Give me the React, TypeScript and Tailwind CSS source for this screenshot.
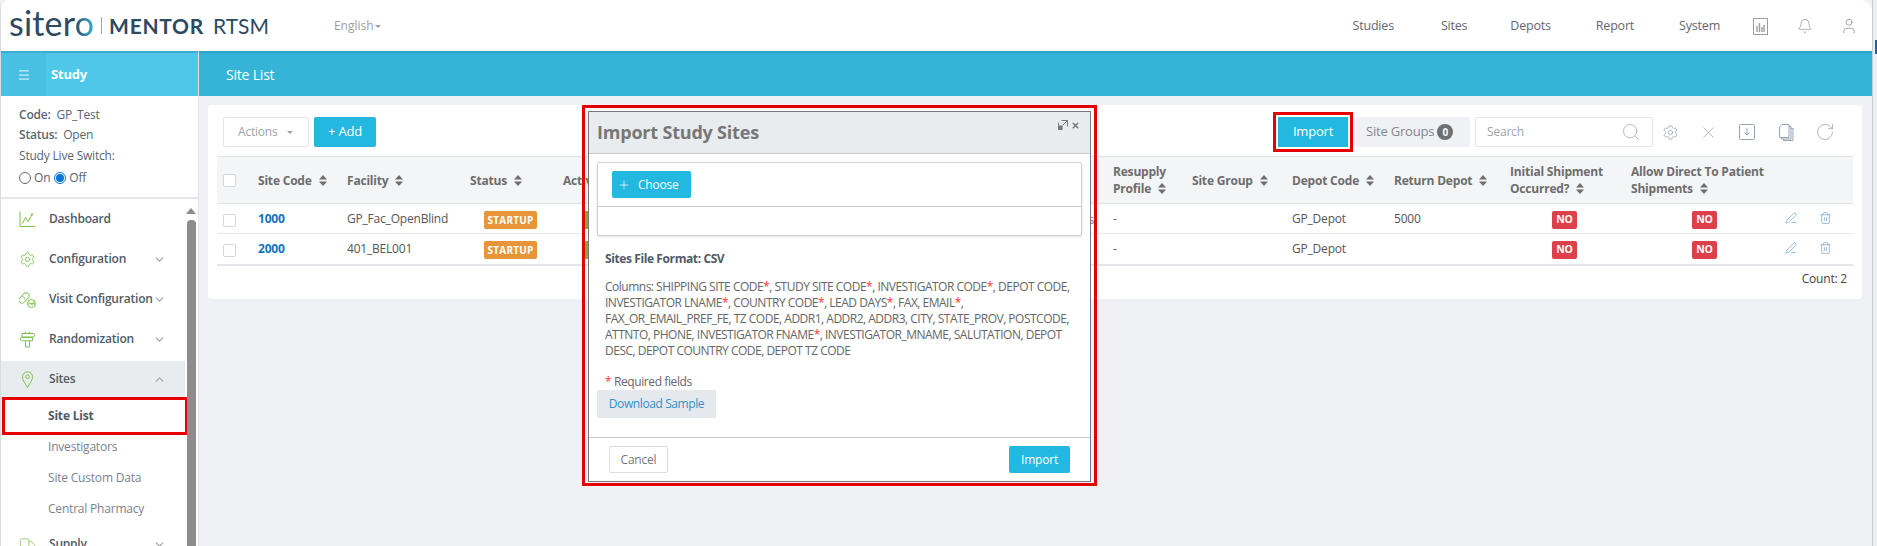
import { Bell, ChevronDown, ChevronUp, PenLine, Plus, RotateCw, Search, Settings, Trash2, Truck, User, X, Menu } from 'lucide-react';

const FONT = "font-['Open_Sans',sans-serif]";

function SortIcon() {
  return (
    <svg className="inline-block ml-[7px] w-[8px] h-[11px] align-[-1px]" viewBox="0 0 8 11" fill="#6f6f6f">
      <path d="M4 0L8 4.5H0z" />
      <path d="M4 11L0 6.5H8z" />
    </svg>
  );
}

function Box({ className = '' }: { className?: string }) {
  return <span className={`block w-[13px] h-[13px] border border-[#d3d6da] rounded-[2px] bg-white ${className}`} />;
}

function DashIcon() {
  return (
    <svg className="w-[17px] h-[17px]" viewBox="0 0 17 17" fill="none" stroke="#7dc14b" strokeWidth="1">
      <path d="M1 0.5V15.5H16.5" />
      <path d="M3.5 12.5L6.5 6.5L9 10.5L13 3.5" />
      <circle cx="13" cy="3.5" r="0.8" />
    </svg>
  );
}

function PillIcon() {
  return (
    <svg className="w-[17px] h-[17px]" viewBox="0 0 17 17" fill="none" stroke="#7dc14b" strokeWidth="1">
      <rect x="-1" y="4" width="12" height="6" rx="3" transform="rotate(-45 5 7)" />
      <path d="M3.5 5L7 8.5" />
      <circle cx="12.5" cy="12.5" r="4" />
      <path d="M9 12.8H16M11 11.5L13 13.5L15 10.5" />
    </svg>
  );
}

function SignIcon() {
  return (
    <svg className="w-[17px] h-[17px]" viewBox="0 0 17 17" fill="none" stroke="#7dc14b" strokeWidth="1">
      <path d="M3 2.5H14.5L16 4.2L14.5 6H3z" />
      <path d="M2.5 6.5H13.5V9.8H2.5L1 8.1z" />
      <path d="M6.5 1V2.5M10.5 1V2.5M6.5 10V16H10.5V10" />
    </svg>
  );
}

function PinIcon() {
  return (
    <svg className="w-[17px] h-[17px]" viewBox="0 0 17 17" fill="none" stroke="#7dc14b" strokeWidth="1">
      <path d="M8.5 16.5C6 12 3.5 9.5 3.5 5.8A5 5 0 0 1 13.5 5.8C13.5 9.5 11 12 8.5 16.5z" />
      <circle cx="8.5" cy="5.8" r="1.8" />
    </svg>
  );
}

function SideItem({ icon, label, chevron, active }: { icon: React.ReactNode; label: string; chevron?: 'up' | 'down'; active?: boolean }) {
  return (
    <div className={`flex items-center pl-[18px] pr-[19px] ${active ? 'h-[36px] mt-[2px] bg-[#e9ecef]' : 'h-[40px]'}`}>
      <span className="w-[30px] shrink-0 flex">{icon}</span>
      <span className="flex-1 whitespace-nowrap text-[12px] font-semibold text-[#4f5b66]">{label}</span>
      {chevron === 'up' && <ChevronUp className="w-[13px] h-[13px] shrink-0 text-[#a3a8ad]" strokeWidth={2.5} />}
      {chevron === 'down' && <ChevronDown className="w-[13px] h-[13px] shrink-0 text-[#a3a8ad]" strokeWidth={2.5} />}
    </div>
  );
}

const rows = [
  { code: '1000', facility: 'GP_Fac_OpenBlind', depot: 'GP_Depot', ret: '5000', hidden: 's' },
  { code: '2000', facility: '401_BEL001', depot: 'GP_Depot', ret: '', hidden: '' },
];

export default function App() {
  return (
    <div className={`${FONT} w-[1877px] h-[546px] overflow-hidden relative bg-[#eff1f5] flex tracking-[-0.2px]`}>
      <div className="w-[1872px] h-full flex flex-col border-l border-[#dcdcdc] overflow-hidden rounded-tl-[8px]">
        {/* Top nav */}
        <header className="h-[51px] shrink-0 bg-white flex items-center pl-[8px] text-[#5e6872] rounded-tr-[12px]">
          <div className="flex items-center text-[#2f4a5f]">
            <span className="font-['Lato',sans-serif] text-[34px] leading-none tracking-[0.2px] -mt-[5px]">
              siter
              <span className="bg-gradient-to-r from-[#2f4a5f] to-[#2fb4d8] bg-clip-text text-transparent">o</span>
            </span>
            <span className="w-px h-[17px] bg-[#9aa5ad] ml-[7px] mr-[7px]" />
            <span className="font-['Lato',sans-serif] text-[21px] font-bold tracking-[0.7px]">MENTOR</span>
            <span className="font-['Lato',sans-serif] text-[21px] ml-[9px] tracking-[0px]">RTSM</span>
          </div>
          <div className="ml-[65px] flex items-center text-[12px] tracking-normal text-[#9a9fa4]">
            English
            <span className="ml-[1px] mt-[1px] border-x-[3px] border-x-transparent border-t-[3px] border-t-[#9a9fa4]" />
          </div>
          <nav className="ml-auto mt-[1px] flex items-center text-[12.5px]">
            <span>Studies</span>
            <span className="ml-[47px]">Sites</span>
            <span className="ml-[43px]">Depots</span>
            <span className="ml-[45px]">Report</span>
            <span className="ml-[45px]">System</span>
            <svg className="ml-[33px] w-[15px] h-[17px]" viewBox="0 0 15 17" fill="none" stroke="#9a9fa4">
              <rect x="0.5" y="0.5" width="14" height="16" />
              <path d="M4 14V8M6.5 14V5M9 14V9M11 14V7" strokeWidth="1.4" />
            </svg>
            <Bell className="ml-[29px] w-[16px] h-[20px] text-[#8f9499]" strokeWidth={1.1} />
            <User className="ml-[27px] mr-[14px] w-[18px] h-[20px] text-[#8f9499]" strokeWidth={1.1} />
          </nav>
        </header>

        <div className="flex flex-1 min-h-0">
          {/* Sidebar */}
          <aside className="w-[198px] shrink-0 bg-white border-r border-[#e3e5e8] flex flex-col">
            <div className="h-[45px] shrink-0 bg-[#4fc7e9] border-t-2 border-[#3faecb] flex items-center text-white">
              <div className="w-[45px] h-full bg-[#48c0e3] flex items-center justify-center pl-[1px]">
                <Menu className="w-[14px] h-[14px]" strokeWidth={1.5} />
              </div>
              <span className="ml-[5px] text-[13px] font-bold">Study</span>
            </div>
            <div className="h-[103px] shrink-0 border-b-2 border-[#e4e6e9] pl-[18px] pt-[9px] text-[12px] text-[#5b6570] leading-[20px]">
              <p><b className="font-semibold">Code:</b>&nbsp; GP_Test</p>
              <p><b className="font-semibold">Status:</b>&nbsp; Open</p>
              <p className="mt-[1px]">Study Live Switch:</p>
              <div className="flex items-center mt-[2px]">
                <span className="w-[12px] h-[12px] rounded-full border border-[#666] bg-white" />
                <span className="ml-[3px]">On</span>
                <span className="ml-[4px] w-[12px] h-[12px] rounded-full border border-[#0b75d5] flex items-center justify-center">
                  <span className="w-[8px] h-[8px] rounded-full bg-[#0b75d5]" />
                </span>
                <span className="ml-[3px]">Off</span>
              </div>
            </div>
            <div className="flex flex-1 min-h-0 overflow-hidden">
              <div className="w-[184px] shrink-0">
                <SideItem icon={<DashIcon />} label="Dashboard" />
                <SideItem icon={<Settings className="w-[17px] h-[17px] text-[#7dc14b]" strokeWidth={1.2} />} label="Configuration" chevron="down" />
                <SideItem icon={<PillIcon />} label="Visit Configuration" chevron="down" />
                <SideItem icon={<SignIcon />} label="Randomization" chevron="down" />
                <SideItem icon={<PinIcon />} label="Sites" chevron="up" active />
                <div className="h-[38px] ml-[1px] border-[3px] border-[#e60000] flex items-center pl-[43px] text-[12px] font-bold text-[#4f5b66] w-[186px]">Site List</div>
                <div className="h-[31px] -mt-[4px] flex items-center pl-[47px] text-[12px] text-[#7a838c]">Investigators</div>
                <div className="h-[31px] flex items-center pl-[47px] text-[12px] text-[#7a838c]">Site Custom Data</div>
                <div className="h-[31px] flex items-center pl-[47px] text-[12px] text-[#7a838c]">Central Pharmacy</div>
                <SideItem icon={<Truck className="w-[17px] h-[17px] text-[#7dc14b]" strokeWidth={1} />} label="Supply" chevron="down" />
              </div>
              <div className="w-[12px] flex flex-col items-center pt-[9px]">
                <span className="border-x-[5px] border-x-transparent border-b-[6px] border-b-[#8c8c8c]" />
                <span className="w-[9px] flex-1 mt-[6px] bg-[#8c8c8c] rounded-t-[4px]" />
              </div>
            </div>
          </aside>

          {/* Main */}
          <main className="flex-1 min-w-0 flex flex-col">
            <div className="h-[45px] shrink-0 bg-[#36b4d7] border-t-2 border-[#2fa3c3] flex items-center pl-[27px] text-[14px] text-white">
              Site List
            </div>
            <div className="pl-[9px] pt-[9px] pr-[10px]">
              <div className="w-[1654px] h-[194px] bg-white rounded-[4px] pt-[12px] px-[9px]">
                {/* Toolbar */}
                <div className="h-[30px] flex items-center relative">
                  <div className="w-[86px] h-[30px] ml-[6px] border border-[#e4e6e9] rounded-[2px] flex items-center pl-[14px] text-[12px] text-[#9fa4a9]">
                    Actions
                    <span className="ml-[9px] border-x-[3px] border-x-transparent border-t-[3px] border-t-[#9fa4a9]" />
                  </div>
                  <button className="ml-[5px] w-[62px] h-[30px] bg-[#22b8e0] rounded-[2px] text-white text-[13px]">+ Add</button>
                  <div className="ml-auto flex items-center">
                    <div className="border-[3px] border-[#e60000] p-[2px] -my-[5px]">
                      <button className="block w-[70px] h-[30px] bg-[#22b8e0] text-white text-[13px]">Import</button>
                    </div>
                    <div className="w-[117px] h-[30px] bg-[#eff1f5] rounded-r-[2px] flex items-center pl-[13px] text-[13px] text-[#7f878f]">
                      Site Groups
                      <span className="ml-[3px] w-[16px] h-[16px] rounded-full bg-[#6f6f6f] text-white text-[10px] font-bold flex items-center justify-center">0</span>
                    </div>
                    <div className="ml-[5px] w-[178px] h-[30px] border border-[#e1e4e8] rounded-[2px] flex items-center pl-[11px] pr-[11px] text-[12px] text-[#9fa4a9]">
                      <span className="flex-1">Search</span>
                      <Search className="w-[20px] h-[20px]" strokeWidth={0.9} />
                    </div>
                    <Settings className="ml-[9px] w-[17px] h-[17px] text-[#97a1ab]" strokeWidth={1.1} />
                    <X className="ml-[20px] w-[19px] h-[19px] text-[#97a1ab]" strokeWidth={0.9} />
                    <svg className="ml-[21px] w-[16px] h-[16px]" viewBox="0 0 16 16" fill="none" stroke="#94a3b5">
                      <rect x="0.5" y="0.5" width="15" height="15" rx="1" />
                      <path d="M8 4V11M5.5 8.5L8 11L10.5 8.5" />
                    </svg>
                    <svg className="ml-[23px] w-[16px] h-[17px]" viewBox="0 0 16 17" fill="none" stroke="#94a3b5">
                      <path d="M4 0.5H11V13.5H1.5V3z" fill="#fff" />
                      <path d="M11 2.5H13V15H3.5V13.5M13 4.5H15V16.5H5.5V15" />
                    </svg>
                    <RotateCw className="ml-[21px] mr-[18px] w-[20px] h-[20px] text-[#97a1ab]" strokeWidth={0.9} />
                  </div>
                </div>

                {/* Table */}
                <table className="mt-[9px] w-[1636px] table-fixed border-collapse text-[12px] text-[#555]">
                  <colgroup>
                    <col className="w-[35px]" />
                    <col className="w-[89px]" />
                    <col className="w-[123px]" />
                    <col className="w-[93px]" />
                    <col className="w-[550px]" />
                    <col className="w-[79px]" />
                    <col className="w-[100px]" />
                    <col className="w-[102px]" />
                    <col className="w-[116px]" />
                    <col className="w-[121px]" />
                    <col className="w-[145px]" />
                    <col className="w-[83px]" />
                  </colgroup>
                  <thead>
                    <tr className="h-[47px] bg-[#f4f5f7] border-y border-[#e0e3e6] text-left text-[#6d6d6d] font-bold leading-[17px]">
                      <th className="pl-[6px]"><Box /></th>
                      <th className="pl-[6px]">Site Code<SortIcon /></th>
                      <th className="pl-[6px]">Facility<SortIcon /></th>
                      <th className="pl-[6px]">Status<SortIcon /></th>
                      <th className="pl-[6px]">Active<SortIcon /></th>
                      <th className="pl-[6px]">Resupply<br />Profile<SortIcon /></th>
                      <th className="pl-[6px]">Site Group<SortIcon /></th>
                      <th className="pl-[6px]">Depot Code<SortIcon /></th>
                      <th className="pl-[6px] whitespace-nowrap">Return Depot<SortIcon /></th>
                      <th className="pl-[6px] whitespace-nowrap">Initial Shipment<br />Occurred?<SortIcon /></th>
                      <th className="pl-[6px] whitespace-nowrap">Allow Direct To Patient<br />Shipments<SortIcon /></th>
                      <th />
                    </tr>
                  </thead>
                  <tbody>
                    {rows.map((r, i) => (
                      <tr key={r.code} className={i === 0 ? 'h-[30px] border-b border-[#e6e8eb]' : 'h-[31px] border-b-2 border-[#e4e6e9]'}>
                        <td className="pl-[6px]"><Box className="mt-[3px]" /></td>
                        <td className="pl-[6px] font-bold text-[#0f75bc]">{r.code}</td>
                        <td className="pl-[6px]">{r.facility}</td>
                        <td className="pl-[20px]">
                          <span className="mt-[3px] w-[53px] h-[18px] bg-[#e8953a] rounded-[2px] text-white text-[10px] font-bold tracking-[0.2px] flex items-center justify-center">STARTUP</span>
                        </td>
                        <td className="pl-[26px] relative">
                          <span className="mt-[3px] block w-[40px] h-[18px] bg-[#7cb32b] rounded-[2px]" />
                          {r.hidden && <span className="absolute right-[13px] top-[7px] text-[#4d80a8]">{r.hidden}</span>}
                        </td>
                        <td className="pl-[6px]">-</td>
                        <td />
                        <td className="pl-[6px]">{r.depot}</td>
                        <td className="pl-[6px]">{r.ret}</td>
                        <td className="pl-[48px]">
                          <span className="mt-[3px] w-[25px] h-[18px] bg-[#dc4048] rounded-[2px] text-white text-[10.5px] font-bold flex items-center justify-center">NO</span>
                        </td>
                        <td className="pl-[67px]">
                          <span className="mt-[3px] w-[25px] h-[18px] bg-[#dc4048] rounded-[2px] text-white text-[10.5px] font-bold flex items-center justify-center">NO</span>
                        </td>
                        <td className="pl-[15px]">
                          <div className="flex items-center -mt-[2px]">
                            <PenLine className="w-[12px] h-[12px] text-[#4f9bd6]" strokeWidth={1.2} />
                            <Trash2 className="ml-[22px] w-[13px] h-[14px] text-[#6d9cc4]" strokeWidth={1.2} />
                          </div>
                        </td>
                      </tr>
                    ))}
                  </tbody>
                </table>
                <div className="mt-[4px] pr-[6px] text-right text-[12px] text-[#444]">Count: 2</div>
              </div>
            </div>
          </main>
        </div>
      </div>
      <div className="w-[5px] h-full bg-[#eceef1] border-l border-[#c9ccd0] pt-[40px] flex justify-end">
        <span className="w-[2px] h-[14px] bg-[#2a5fa8]" />
      </div>

      {/* Import modal */}
      <div className="absolute left-[582px] top-[105px] w-[515px] h-[381px] border-[3px] border-[#e60000] pt-[3px] px-[3px] pb-[1px] text-[12px] text-[#666]">
        <div className="h-full border border-[#777] bg-white flex flex-col">
          <div className="h-[42px] shrink-0 bg-[#e9ecef] border-b border-[#ccc] flex pl-[8px] pt-[8px] relative">
            <h2 className="text-[18px] font-bold text-[#777] leading-[24px]">Import Study Sites</h2>
            <div className="absolute right-[10px] top-[8px] flex items-center">
              <svg className="w-[10px] h-[10px]" viewBox="0 0 10 10" fill="none" stroke="#777">
                <path d="M3.5 0.5H9.5V6.5M9.5 0.5L4.5 5.5M0.5 5.5V2.5" />
                <rect x="0.5" y="6" width="3.5" height="3.5" fill="#777" />
              </svg>
              <X className="ml-[3px] w-[9px] h-[9px] text-[#777]" strokeWidth={4} />
            </div>
          </div>
          <div className="flex-1 px-[8px] pt-[8px]">
            <div className="h-[74px] border border-[#d0d0d0] rounded-[2px] flex flex-col shadow-sm">
              <div className="h-[44px] border-b border-[#ccc] pl-[14px] pt-[8px]">
                <button className="w-[79px] h-[27px] bg-[#22b8e0] rounded-[2px] text-white text-[12px] flex items-center pl-[5px]">
                  <Plus className="w-[14px] h-[14px]" strokeWidth={1.2} />
                  <span className="ml-[7px]">Choose</span>
                </button>
              </div>
            </div>
            <p className="mt-[14px] ml-[8px] font-bold text-[#4f5b66] leading-[18px] tracking-[-0.4px]">Sites File Format: CSV</p>
            <p className="mt-[11px] ml-[8px] w-[478px] tracking-[-0.5px] leading-[16px]">
              Columns: SHIPPING SITE CODE<i className="not-italic text-[#f33]">*</i>, STUDY SITE CODE<i className="not-italic text-[#f33]">*</i>, INVESTIGATOR CODE<i className="not-italic text-[#f33]">*</i>, DEPOT CODE, INVESTIGATOR LNAME<i className="not-italic text-[#f33]">*</i>, COUNTRY CODE<i className="not-italic text-[#f33]">*</i>, LEAD DAYS<i className="not-italic text-[#f33]">*</i>, FAX, EMAIL<i className="not-italic text-[#f33]">*</i>, FAX_OR_EMAIL_PREF_FE, TZ CODE, ADDR1, ADDR2, ADDR3, CITY, STATE_PROV, POSTCODE, ATTNTO, PHONE, INVESTIGATOR FNAME<i className="not-italic text-[#f33]">*</i>, INVESTIGATOR_MNAME, SALUTATION, DEPOT DESC, DEPOT COUNTRY CODE, DEPOT TZ CODE
            </p>
            <p className="mt-[15px] ml-[8px] leading-[16px] tracking-[-0.4px]"><i className="not-italic text-[#f33]">*</i> Required fields</p>
            <div className="w-[119px] h-[28px] bg-[#e5e9ed] flex items-center justify-center text-[#2f8fcf] tracking-[-0.4px]">Download Sample</div>
          </div>
          <div className="h-[44px] shrink-0 border-t border-[#ccc] flex items-center justify-between pl-[20px] pr-[20px]">
            <button className="w-[59px] h-[27px] border border-[#ddd] rounded-[2px] text-[#777] text-[12px]">Cancel</button>
            <button className="w-[61px] h-[27px] bg-[#22b8e0] rounded-[2px] text-white text-[12px]">Import</button>
          </div>
        </div>
      </div>
    </div>
  );
}
